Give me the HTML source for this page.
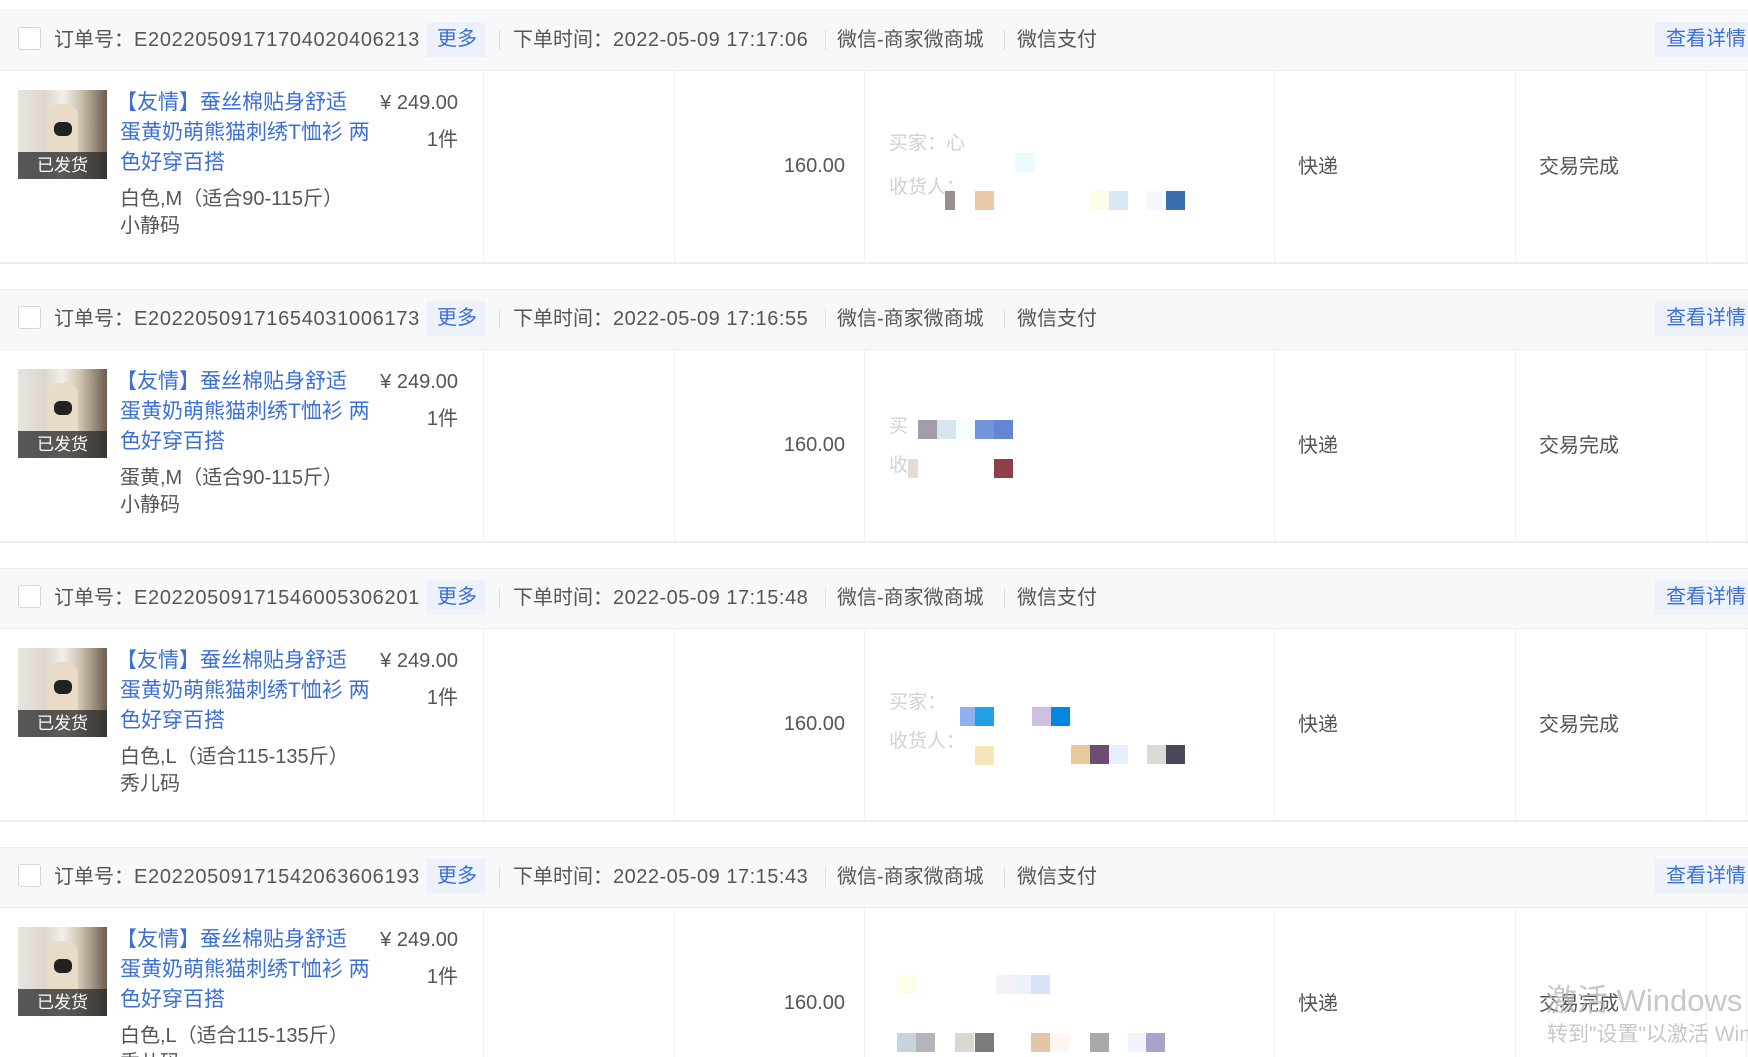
<!DOCTYPE html>
<html style="width:1748px;height:1057px;overflow:hidden"><head><meta charset="utf-8">
<style>
*{margin:0;padding:0;box-sizing:border-box}
body{width:1748px;height:1057px;background:#fff;position:relative;overflow:hidden;font-family:"Liberation Sans","Noto Sans CJK SC",sans-serif;color:#555;font-size:20px}
.b{position:absolute;left:0;width:1748px;height:279px;overflow:hidden}
.hd{position:absolute;left:0;top:0;width:1748px;height:61px;background:#f7f8fa;border-top:1px solid #eeeff2;border-bottom:1px solid #ebedf0}
.bd{position:absolute;left:0;top:61px;width:1748px;height:193px;border-bottom:2px solid #eceef1}
.t{position:absolute;white-space:nowrap;line-height:30px;transform:translateY(-15px)}
.cb{position:absolute;left:18px;top:17px;width:23px;height:23px;border:1px solid #d4d6da;border-radius:3px;background:#fff}
.btn{position:absolute;top:12px;height:35px;background:#edf2fa;color:#3b6fd8}
.sep{position:absolute;top:20px;width:1px;height:20px;background:#dcdfe4}
.vl{position:absolute;top:61px;width:1px;height:193px;background:#eef0f2}
.img{position:absolute;left:18px;top:80px;width:89px;height:89px;background:linear-gradient(90deg,#e8e4df 0,#ddd6cc 30%,#f2efea 50%,#cfc3b0 70%,#6b5d50 100%);overflow:hidden}
.img .p{position:absolute;left:30px;top:14px;width:30px;height:60px;background:#e8dcc6;border-radius:12px 12px 4px 4px}
.img .p2{position:absolute;left:36px;top:32px;width:18px;height:14px;background:#222;border-radius:6px}
.img .o{position:absolute;left:0;bottom:0;width:89px;height:27px;background:rgba(40,40,40,.75);color:#fff;font-size:17px;text-align:center;line-height:27px}
.ti{color:#3b6fd8;font-size:21px}
.sq{position:absolute;width:19px;height:19px}
.gl{color:#cfd1d5;font-size:19px}
.num{letter-spacing:0.7px}
</style></head><body>

<div class="b" style="top:10px">
 <div class="hd"></div><div class="bd"></div>
 <div class="cb"></div>
 <div class="t" style="left:54px;top:30px">订单号：<span class="num">E20220509171704020406213</span></div>
 <div class="btn" style="left:426px;width:60px"><div class="t" style="left:11px;top:17px">更多</div></div>
 <div class="sep" style="left:499px"></div>
 <div class="t" style="left:513px;top:30px">下单时间：<span style="letter-spacing:.5px">2022-05-09 17:17:06</span></div>
 <div class="sep" style="left:825px"></div>
 <div class="t" style="left:837px;top:30px">微信-商家微商城</div>
 <div class="sep" style="left:1004px"></div>
 <div class="t" style="left:1017px;top:30px">微信支付</div>
 <div class="btn" style="left:1655px;width:93px"><div class="t" style="left:11px;top:17px">查看详情</div></div>
 <div class="vl" style="left:483px"></div><div class="vl" style="left:674px"></div><div class="vl" style="left:864px"></div><div class="vl" style="left:1274px"></div><div class="vl" style="left:1515px"></div><div class="vl" style="left:1706px"></div><div class="vl" style="left:1746px"></div>
 <div class="img"><div class="p"></div><div class="p2"></div><div class="o">已发货</div></div>
 <div class="t ti" style="left:116px;top:93px">【友情】蚕丝棉贴身舒适</div>
 <div class="t ti" style="left:120px;top:123px">蛋黄奶萌熊猫刺绣T恤衫 两</div>
 <div class="t ti" style="left:120px;top:153px">色好穿百搭</div>
 <div class="t" style="left:120px;top:189px">白色,M（适合90-115斤）</div>
 <div class="t" style="left:120px;top:216px">小静码</div>
 <div class="t" style="right:1290px;top:93px">¥ 249.00</div>
 <div class="t" style="right:1290px;top:130px">1件</div>
 <div class="t" style="right:903px;top:156px">160.00</div>
 <div class="t gl" style="left:889px;top:134px">买家：心</div>
 <div class="t gl" style="left:889px;top:178px">收货人：</div>
 <div class="sq" style="left:1015px;top:143px;background:#e9fbfd"></div>
 <div class="sq" style="left:945px;top:181px;width:10px;background:#9b8f90"></div>
 <div class="sq" style="left:975px;top:181px;background:#e9c7a7"></div>
 <div class="sq" style="left:1090px;top:181px;background:#fdfce6"></div>
 <div class="sq" style="left:1109px;top:181px;background:#d6e8f6"></div>
 <div class="sq" style="left:1147px;top:181px;background:#f5f9fe"></div>
 <div class="sq" style="left:1166px;top:181px;background:#3a6cb0"></div>
 <div class="t" style="left:1298px;top:157px">快递</div>
 <div class="t" style="left:1539px;top:157px">交易完成</div>
</div>

<div class="b" style="top:289px">
 <div class="hd"></div><div class="bd"></div>
 <div class="cb"></div>
 <div class="t" style="left:54px;top:30px">订单号：<span class="num">E20220509171654031006173</span></div>
 <div class="btn" style="left:426px;width:60px"><div class="t" style="left:11px;top:17px">更多</div></div>
 <div class="sep" style="left:499px"></div>
 <div class="t" style="left:513px;top:30px">下单时间：<span style="letter-spacing:.5px">2022-05-09 17:16:55</span></div>
 <div class="sep" style="left:825px"></div>
 <div class="t" style="left:837px;top:30px">微信-商家微商城</div>
 <div class="sep" style="left:1004px"></div>
 <div class="t" style="left:1017px;top:30px">微信支付</div>
 <div class="btn" style="left:1655px;width:93px"><div class="t" style="left:11px;top:17px">查看详情</div></div>
 <div class="vl" style="left:483px"></div><div class="vl" style="left:674px"></div><div class="vl" style="left:864px"></div><div class="vl" style="left:1274px"></div><div class="vl" style="left:1515px"></div><div class="vl" style="left:1706px"></div><div class="vl" style="left:1746px"></div>
 <div class="img"><div class="p"></div><div class="p2"></div><div class="o">已发货</div></div>
 <div class="t ti" style="left:116px;top:93px">【友情】蚕丝棉贴身舒适</div>
 <div class="t ti" style="left:120px;top:123px">蛋黄奶萌熊猫刺绣T恤衫 两</div>
 <div class="t ti" style="left:120px;top:153px">色好穿百搭</div>
 <div class="t" style="left:120px;top:189px">蛋黄,M（适合90-115斤）</div>
 <div class="t" style="left:120px;top:216px">小静码</div>
 <div class="t" style="right:1290px;top:93px">¥ 249.00</div>
 <div class="t" style="right:1290px;top:130px">1件</div>
 <div class="t" style="right:903px;top:156px">160.00</div>
 <div class="t gl" style="left:889px;top:138px">买</div>
 <div class="t gl" style="left:889px;top:177px">收</div>
 <div class="sq" style="left:918px;top:131px;background:#a39ca8"></div>
 <div class="sq" style="left:937px;top:131px;background:#d6e5ef"></div>
 <div class="sq" style="left:956px;top:131px;background:#f6fdff"></div>
 <div class="sq" style="left:975px;top:131px;background:#7194dc"></div>
 <div class="sq" style="left:994px;top:131px;background:#6584d6"></div>
 <div class="sq" style="left:908px;top:170px;width:10px;background:#e6dccf"></div>
 <div class="sq" style="left:994px;top:170px;background:#8f3f47"></div>
 <div class="t" style="left:1298px;top:157px">快递</div>
 <div class="t" style="left:1539px;top:157px">交易完成</div>
</div>

<div class="b" style="top:568px">
 <div class="hd"></div><div class="bd"></div>
 <div class="cb"></div>
 <div class="t" style="left:54px;top:30px">订单号：<span class="num">E20220509171546005306201</span></div>
 <div class="btn" style="left:426px;width:60px"><div class="t" style="left:11px;top:17px">更多</div></div>
 <div class="sep" style="left:499px"></div>
 <div class="t" style="left:513px;top:30px">下单时间：<span style="letter-spacing:.5px">2022-05-09 17:15:48</span></div>
 <div class="sep" style="left:825px"></div>
 <div class="t" style="left:837px;top:30px">微信-商家微商城</div>
 <div class="sep" style="left:1004px"></div>
 <div class="t" style="left:1017px;top:30px">微信支付</div>
 <div class="btn" style="left:1655px;width:93px"><div class="t" style="left:11px;top:17px">查看详情</div></div>
 <div class="vl" style="left:483px"></div><div class="vl" style="left:674px"></div><div class="vl" style="left:864px"></div><div class="vl" style="left:1274px"></div><div class="vl" style="left:1515px"></div><div class="vl" style="left:1706px"></div><div class="vl" style="left:1746px"></div>
 <div class="img"><div class="p"></div><div class="p2"></div><div class="o">已发货</div></div>
 <div class="t ti" style="left:116px;top:93px">【友情】蚕丝棉贴身舒适</div>
 <div class="t ti" style="left:120px;top:123px">蛋黄奶萌熊猫刺绣T恤衫 两</div>
 <div class="t ti" style="left:120px;top:153px">色好穿百搭</div>
 <div class="t" style="left:120px;top:189px">白色,L（适合115-135斤）</div>
 <div class="t" style="left:120px;top:216px">秀儿码</div>
 <div class="t" style="right:1290px;top:93px">¥ 249.00</div>
 <div class="t" style="right:1290px;top:130px">1件</div>
 <div class="t" style="right:903px;top:156px">160.00</div>
 <div class="t gl" style="left:889px;top:135px">买家：</div>
 <div class="t gl" style="left:889px;top:174px">收货人：</div>
 <div class="sq" style="left:960px;top:139px;width:15px;background:#8fb0ee"></div>
 <div class="sq" style="left:975px;top:139px;background:#21a0e6"></div>
 <div class="sq" style="left:1032px;top:139px;background:#cdbfde"></div>
 <div class="sq" style="left:1051px;top:139px;background:#0088e0"></div>
 <div class="sq" style="left:975px;top:178px;background:#f6e7bb"></div>
 <div class="sq" style="left:1071px;top:177px;background:#e8c99a"></div>
 <div class="sq" style="left:1090px;top:177px;background:#6a4c74"></div>
 <div class="sq" style="left:1109px;top:177px;background:#e6f0fc"></div>
 <div class="sq" style="left:1147px;top:177px;background:#ddd9d5"></div>
 <div class="sq" style="left:1166px;top:177px;background:#4a4858"></div>
 <div class="t" style="left:1298px;top:157px">快递</div>
 <div class="t" style="left:1539px;top:157px">交易完成</div>
</div>

<div class="b" style="top:847px;height:210px">
 <div class="hd"></div><div class="bd"></div>
 <div class="cb"></div>
 <div class="t" style="left:54px;top:30px">订单号：<span class="num">E20220509171542063606193</span></div>
 <div class="btn" style="left:426px;width:60px"><div class="t" style="left:11px;top:17px">更多</div></div>
 <div class="sep" style="left:499px"></div>
 <div class="t" style="left:513px;top:30px">下单时间：<span style="letter-spacing:.5px">2022-05-09 17:15:43</span></div>
 <div class="sep" style="left:825px"></div>
 <div class="t" style="left:837px;top:30px">微信-商家微商城</div>
 <div class="sep" style="left:1004px"></div>
 <div class="t" style="left:1017px;top:30px">微信支付</div>
 <div class="btn" style="left:1655px;width:93px"><div class="t" style="left:11px;top:17px">查看详情</div></div>
 <div class="vl" style="left:483px"></div><div class="vl" style="left:674px"></div><div class="vl" style="left:864px"></div><div class="vl" style="left:1274px"></div><div class="vl" style="left:1515px"></div><div class="vl" style="left:1706px"></div><div class="vl" style="left:1746px"></div>
 <div class="img"><div class="p"></div><div class="p2"></div><div class="o">已发货</div></div>
 <div class="t ti" style="left:116px;top:93px">【友情】蚕丝棉贴身舒适</div>
 <div class="t ti" style="left:120px;top:123px">蛋黄奶萌熊猫刺绣T恤衫 两</div>
 <div class="t ti" style="left:120px;top:153px">色好穿百搭</div>
 <div class="t" style="left:120px;top:189px">白色,L（适合115-135斤）</div>
 <div class="t" style="left:120px;top:216px">秀儿码</div>
 <div class="t" style="right:1290px;top:93px">¥ 249.00</div>
 <div class="t" style="right:1290px;top:130px">1件</div>
 <div class="t" style="right:903px;top:156px">160.00</div>
 <div class="sq" style="left:897px;top:128px;background:#fdfde8"></div>
 <div class="sq" style="left:996px;top:128px;background:#f5f0f8"></div>
 <div class="sq" style="left:1012px;top:128px;background:#eaf2fb"></div>
 <div class="sq" style="left:1031px;top:128px;background:#d6e2f6"></div>
 <div class="sq" style="left:897px;top:186px;background:#c9d3dc"></div>
 <div class="sq" style="left:916px;top:186px;background:#b4b4bc"></div>
 <div class="sq" style="left:955px;top:186px;background:#dcd6d0"></div>
 <div class="sq" style="left:975px;top:186px;background:#7b7c80"></div>
 <div class="sq" style="left:1031px;top:186px;background:#e0c7a8"></div>
 <div class="sq" style="left:1050px;top:186px;background:#fdf7f0"></div>
 <div class="sq" style="left:1090px;top:186px;background:#a9a8ad"></div>
 <div class="sq" style="left:1128px;top:186px;background:#eef3fc"></div>
 <div class="sq" style="left:1146px;top:186px;background:#a9a3c9"></div>
 <div class="t" style="left:1298px;top:157px">快递</div>
 <div class="t" style="left:1539px;top:157px">交易完成</div>
</div>

<div style="position:absolute;left:1546px;top:981px;font-size:31px;line-height:40px;white-space:nowrap;color:rgba(180,180,180,.75)">激活 Windows</div>
<div style="position:absolute;left:1547px;top:1020px;font-size:21px;line-height:30px;white-space:nowrap;color:rgba(185,185,185,.8);width:201px;overflow:hidden">转到"设置"以激活 Windows。</div>
</body></html>
